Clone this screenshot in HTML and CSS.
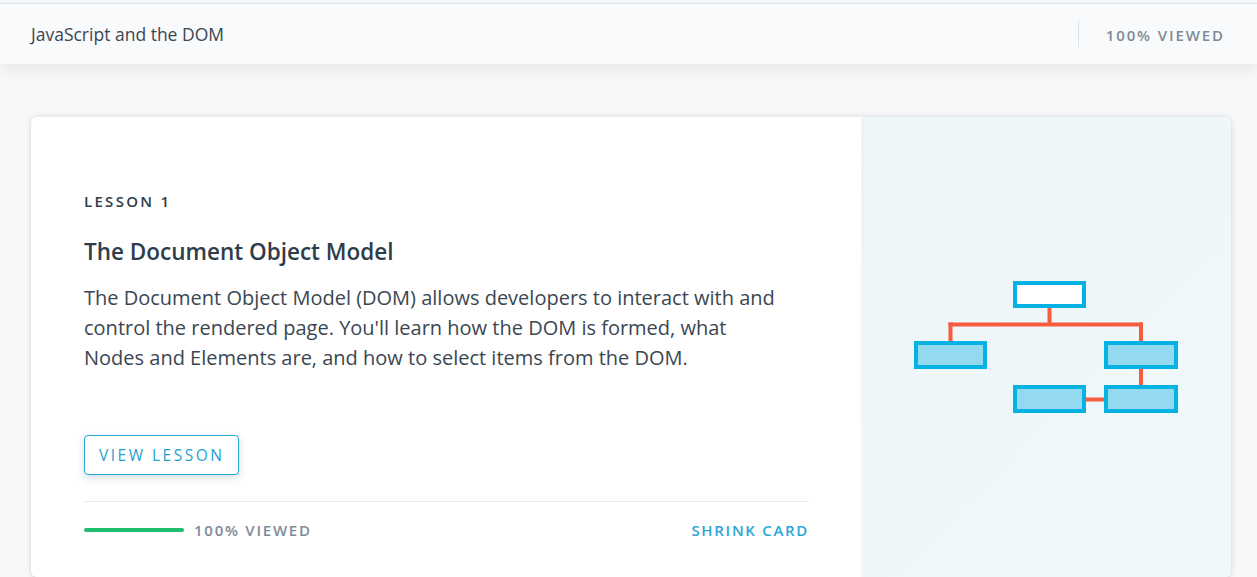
FILE: index.html
```html
<!DOCTYPE html>
<html>
<head>
<meta charset="utf-8">
<link rel="stylesheet" href="styles.css">
</head>
<body>
<header class="topbar">
  <div class="topbar-title">JavaScript and the DOM</div>
  <div class="topbar-right">
    <span class="topbar-sep"></span>
    <span class="topbar-status">100% VIEWED</span>
  </div>
</header>
<main class="main">
  <section class="card">
    <div class="card-body">
      <div class="eyebrow">LESSON 1</div>
      <h2 class="title">The Document Object Model</h2>
      <p class="desc">The Document Object Model (DOM) allows developers to interact with and control the rendered page. You'll learn how the DOM is formed, what Nodes and Elements are, and how to select items from the DOM.</p>
      <div class="actions"><button class="btn">VIEW LESSON</button></div>
      <div class="footer">
        <div class="progress">
          <span class="bar"><span class="bar-fill" style="width:100%"></span></span>
          <span class="progress-label">100% VIEWED</span>
        </div>
        <span class="shrink">SHRINK CARD</span>
      </div>
    </div>
    <div class="card-art">
      <svg width="266" height="132" viewBox="0 0 266 132">
        <g stroke="#f55d3e" stroke-width="4" fill="none">
          <line x1="136.5" y1="25" x2="136.5" y2="44"/>
          <line x1="35.5" y1="43.5" x2="230" y2="43.5"/>
          <line x1="37.5" y1="41.5" x2="37.5" y2="62"/>
          <line x1="228" y1="41.5" x2="228" y2="62"/>
          <line x1="228" y1="86" x2="228" y2="106"/>
          <line x1="171" y1="118.5" x2="193" y2="118.5"/>
        </g>
        <g stroke="#06b2e3" stroke-width="4">
          <rect x="102" y="2" width="69" height="23" fill="#ffffff"/>
          <rect x="3" y="62" width="69" height="24" fill="#93d9ef"/>
          <rect x="193" y="62" width="70" height="24" fill="#93d9ef"/>
          <rect x="102" y="106" width="69" height="24" fill="#93d9ef"/>
          <rect x="193" y="106" width="70" height="24" fill="#93d9ef"/>
        </g>
      </svg>
    </div>
  </section>
</main>
</body>
</html>
```

FILE: styles.css
```css
html, body {
  margin: 0;
  padding: 0;
}
body {
  background: #f7f8fa;
  font-family: "Open Sans", "Noto Sans", sans-serif;
  color: #2e3d49;
  padding-top: 3px;
  height: 574px;
  overflow: hidden;
}
.topbar {
  height: 60px;
  border-top: 1px solid #dfe3e7;
  background: #f9fafb;
  display: flex;
  align-items: center;
  justify-content: space-between;
  padding: 0 34px 0 31px;
  box-shadow: 0 6px 16px rgba(0, 0, 0, 0.07);
  position: relative;
  z-index: 1;
}
.topbar-title {
  font-size: 17.5px;
  color: #3b4650;
  margin-top: -1px;
}
.topbar-right {
  display: flex;
  align-items: center;
  gap: 27px;
}
.topbar-sep {
  width: 1px;
  height: 26px;
  background: #dde2e6;
}
.topbar-status {
  font-size: 15px;
  font-weight: 600;
  letter-spacing: 1.9px;
  color: #7d8b97;
  margin-right: -2px;
  margin-top: 2px;
}
.main {
  padding: 53px 26px 0 31px;
}
.card {
  display: flex;
  width: 1200px;
  height: 460px;
  background: #fff;
  border-radius: 6px;
  box-shadow: 0 0 6px rgba(0, 0, 0, 0.12), 0 2px 3px rgba(0, 0, 0, 0.06);
  overflow: hidden;
}
.card-body {
  width: 830px;
  box-sizing: border-box;
  padding: 74px 52px 0 53px;
  display: flex;
  flex-direction: column;
}
.eyebrow {
  font-size: 15px;
  line-height: 20px;
  font-weight: 600;
  letter-spacing: 2.3px;
  color: #2e3d49;
}
.title {
  margin: 26px 0 0;
  font-size: 22.5px;
  line-height: 30px;
  font-weight: 600;
  color: #2e3d49;
}
.desc {
  margin: 16px 0 0;
  max-width: 700px;
  font-size: 20px;
  line-height: 30px;
  color: #3a4752;
}
.actions {
  margin-top: 62px;
}
.btn {
  font-family: inherit;
  height: 40px;
  padding: 0 14px;
  background: #fff;
  border: 1px solid #25a8d6;
  border-radius: 4px;
  color: #1f9fd0;
  font-size: 15.5px;
  letter-spacing: 2.5px;
  box-shadow: 0 3px 8px rgba(30, 90, 120, 0.2);
}
.footer {
  margin-top: 26px;
  border-top: 1px solid #e8ebee;
  height: 56px;
  display: flex;
  align-items: center;
  justify-content: space-between;
}
.progress {
  display: flex;
  align-items: center;
  gap: 10px;
}
.bar {
  width: 100px;
  height: 4px;
  border-radius: 2px;
  background: #e8ebee;
  display: flex;
}
.bar-fill {
  display: block;
  height: 100%;
  border-radius: 2px;
  background: #1ebe6c;
}
.progress-label {
  font-size: 15px;
  font-weight: 600;
  letter-spacing: 1.75px;
  color: #7d8b97;
}
.shrink {
  font-size: 15px;
  font-weight: 600;
  letter-spacing: 1.7px;
  color: #2aa6d6;
  margin-right: 0;
}
.card-art {
  flex: 1;
  display: flex;
  align-items: center;
  justify-content: center;
  background: linear-gradient(135deg, #edf5f9 0%, #eff7fa 60%, #f0f9fc 100%);
}
```
